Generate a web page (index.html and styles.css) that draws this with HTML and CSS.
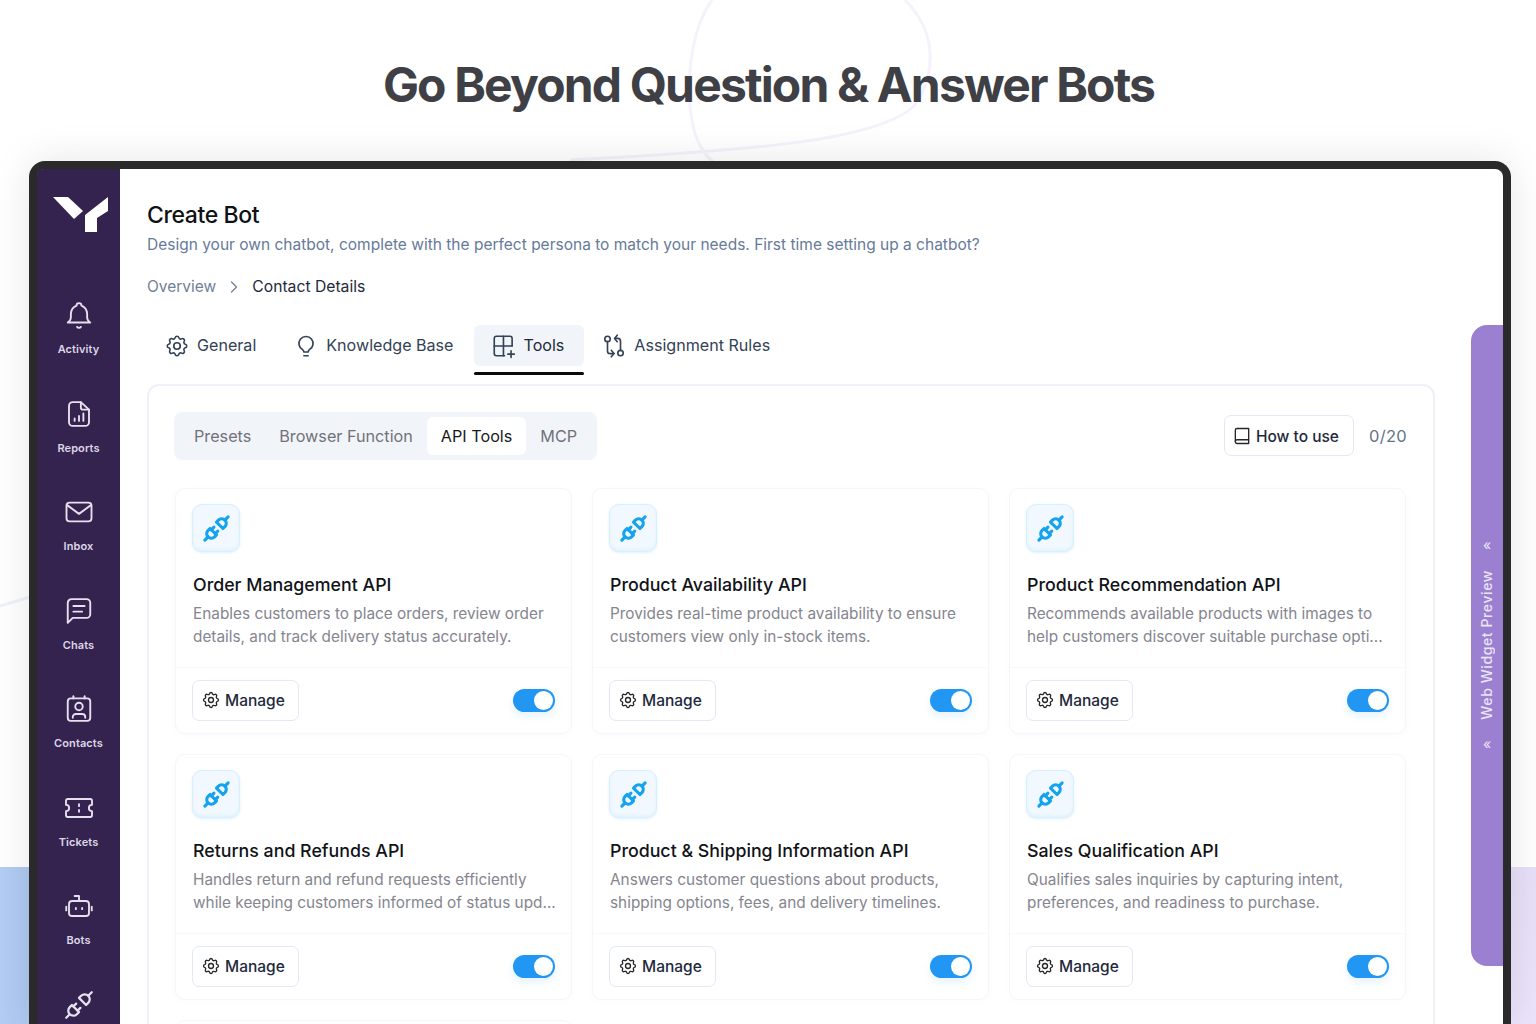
FILE: index.html
```html
<!DOCTYPE html>
<html lang="en">
<head>
<meta charset="utf-8">
<title>Go Beyond Question &amp; Answer Bots</title>
<link rel="stylesheet" href="styles.css">
</head>
<body>
<svg width="0" height="0" class="defs">
  <symbol id="i-plug" viewBox="0 0 24 24"><path d="M7 12l5 5l-1.5 1.5a3.536 3.536 0 1 1 -5 -5l1.5 -1.5z"/><path d="M17 12l-5 -5l1.5 -1.5a3.536 3.536 0 1 1 5 5l-1.5 1.5z"/><path d="M3 21l2.5 -2.5"/><path d="M18.5 5.5l2.5 -2.5"/><path d="M10 11l-2 2"/><path d="M13 14l-2 2"/></symbol>
  <symbol id="i-gear" viewBox="0 0 24 24"><path d="M10.325 4.317c.426 -1.756 2.924 -1.756 3.35 0a1.724 1.724 0 0 0 2.573 1.066c1.543 -.94 3.31 .826 2.37 2.37a1.724 1.724 0 0 0 1.065 2.572c1.756 .426 1.756 2.924 0 3.35a1.724 1.724 0 0 0 -1.066 2.573c.94 1.543 -.826 3.31 -2.37 2.37a1.724 1.724 0 0 0 -2.572 1.065c-.426 1.756 -2.924 1.756 -3.35 0a1.724 1.724 0 0 0 -2.573 -1.066c-1.543 .94 -3.31 -.826 -2.37 -2.37a1.724 1.724 0 0 0 -1.065 -2.572c-1.756 -.426 -1.756 -2.924 0 -3.35a1.724 1.724 0 0 0 1.066 -2.573c-.94 -1.543 .826 -3.31 2.37 -2.37c1 .608 2.296 .07 2.572 -1.065z"/><circle cx="12" cy="12" r="3"/></symbol>
</svg>
<div class="backdrop" aria-hidden="true">
  <div class="strip strip-left"></div>
  <div class="strip strip-right"></div>
  <svg class="curves" viewBox="0 0 1536 1024" width="1536" height="1024" fill="none">
    <path d="M712 0C690 30 684 90 694 130C700 152 716 170 728 165" stroke="#f6f2fc" stroke-width="3"/>
    <path d="M905 0C935 30 938 70 915 105C880 140 760 150 570 160" stroke="#f6f2fc" stroke-width="3"/>
    <path d="M0 606L30 597" stroke="#eef2fa" stroke-width="3"/>
  </svg>
</div>
<main class="page">
  <h1 class="hero">Go Beyond Question &amp; Answer Bots</h1>
  <div class="frame">
    <aside class="sidebar">
      <svg class="logo" viewBox="0 0 55 36" width="55" height="36"><path d="M0 0H15L30 14L21 22Z"/><path d="M55 0V14L44 21V35H32V18Z"/></svg>
      <nav class="nav">
        <a class="nav-item"><svg viewBox="0 0 24 24" class="nav-ico"><path d="M10 4.500a2 2 0 1 1 4 0a7.500 7.500 0 0 1 4.500 6.500v3a5 5 0 0 0 2.500 4h-18a5 5 0 0 0 2.500 -4v-3a7.500 7.500 0 0 1 4.500 -6.500"/><path d="M10.500 21.500a1.800 1.800 0 0 0 3 0"/></svg><span>Activity</span></a>
        <a class="nav-item"><svg viewBox="0 0 24 24" class="nav-ico"><path d="M13.500 2.500v4.500a1.500 1.500 0 0 0 1.500 1.500h5"/><path d="M17 21.500h-10a3 3 0 0 1 -3 -3v-13a3 3 0 0 1 3 -3h6.500l6.500 6v10a3 3 0 0 1 -3 3z"/><path d="M8.500 17.500v-2"/><path d="M12 17.500v-4"/><path d="M15.500 17.500v-6"/></svg><span>Reports</span></a>
        <a class="nav-item"><svg viewBox="0 0 24 24" class="nav-ico"><rect x="2" y="4.500" width="20" height="15" rx="2.500"/><path d="M2.500 6.500l9.500 7l9.500 -7"/></svg><span>Inbox</span></a>
        <a class="nav-item"><svg viewBox="0 0 24 24" class="nav-ico"><path d="M3 21.500v-16a3 3 0 0 1 3 -3h12a3 3 0 0 1 3 3v9a3 3 0 0 1 -3 3h-11z"/><path d="M7.500 8h9"/><path d="M7.500 12.500h7"/></svg><span>Chats</span></a>
        <a class="nav-item"><svg viewBox="0 0 24 24" class="nav-ico"><rect x="3" y="3.500" width="18" height="18" rx="2.500"/><path d="M7.500 3.500v-1.800"/><path d="M16.500 3.500v-1.800"/><circle cx="12" cy="10" r="3"/><path d="M7 19v-.5a2.500 2.500 0 0 1 2.500 -2.500h5a2.500 2.500 0 0 1 2.500 2.500v.5"/></svg><span>Contacts</span></a>
        <a class="nav-item"><svg viewBox="0 0 24 24" class="nav-ico"><path d="M3 4.800h18a1.400 1.400 0 0 1 1.400 1.400v3.300a2.500 2.500 0 0 0 0 5v3.300a1.400 1.400 0 0 1 -1.400 1.400h-18a1.400 1.400 0 0 1 -1.400 -1.400v-3.300a2.500 2.500 0 0 0 0 -5v-3.300a1.400 1.400 0 0 1 1.400 -1.400z"/><path d="M12 9v1.500"/><path d="M12 13.500v1.500"/></svg><span>Tickets</span></a>
        <a class="nav-item"><svg viewBox="0 0 24 24" class="nav-ico"><rect x="4" y="8" width="16" height="12" rx="2.500"/><path d="M12 8v-4h-3.500"/><path d="M9.500 13.500v1"/><path d="M14.500 13.500v1"/><path d="M1.800 12.500v3"/><path d="M22.200 12.500v3"/></svg><span>Bots</span></a>
        <a class="nav-item"><svg viewBox="0 0 24 24" class="nav-ico nav-ico-plug"><use href="#i-plug"/></svg></a>
      </nav>
    </aside>
    <section class="content">
      <header class="head">
        <h2 class="head-title">Create Bot</h2>
        <p class="head-sub">Design your own chatbot, complete with the perfect persona to match your needs. First time setting up a chatbot?</p>
      </header>
      <div class="crumbs">
        <span class="crumb-muted">Overview</span>
        <svg viewBox="0 0 24 24" class="crumb-sep"><path d="M9 6l6 6l-6 6"/></svg>
        <span class="crumb-cur">Contact Details</span>
      </div>
      <div class="tabs">
        <a class="tab"><svg class="tab-ico" viewBox="0 0 24 24"><use href="#i-gear"/></svg>General</a>
        <a class="tab"><svg class="tab-ico" viewBox="0 0 24 24"><path d="M9 15.500a6.500 6.500 0 1 1 6 0c-.7 .5 -1 1 -1 2h-4c0 -1 -.3 -1.500 -1 -2z"/><path d="M10 21h4"/></svg>Knowledge Base</a>
        <a class="tab tab-on"><svg class="tab-ico" viewBox="0 0 24 24"><path d="M19.500 12v-7a2 2 0 0 0 -2 -2h-12.500a2 2 0 0 0 -2 2v14a2 2 0 0 0 2 2h7.500"/><path d="M3 12h16.500"/><path d="M11.500 3v18"/><path d="M18.500 16.500v6"/><path d="M15.500 19.500h6"/></svg>Tools</a>
        <a class="tab"><svg class="tab-ico" viewBox="0 0 24 24"><circle cx="6" cy="5.500" r="2.500"/><circle cx="18" cy="18.500" r="2.500"/><path d="M6 8v8.500a2.500 2.500 0 0 0 2.500 2.500h3.500"/><path d="M9.500 16l2.500 3l-2.500 3"/><path d="M18 16v-8.500a2.500 2.500 0 0 0 -2.500 -2.500h-2.500"/><path d="M15 2l-2.500 3l2.500 3"/></svg>Assignment Rules</a>
      </div>
      <div class="panel">
        <div class="panel-top">
          <div class="segments">
            <span class="seg">Presets</span>
            <span class="seg">Browser Function</span>
            <span class="seg seg-on">API Tools</span>
            <span class="seg">MCP</span>
          </div>
          <div class="panel-right">
            <button class="btn btn-how"><svg class="btn-ico" viewBox="0 0 24 24"><path d="M4 19v-14a2 2 0 0 1 2 -2h14v18h-14a2 2 0 0 1 -2 -2z"/><path d="M4 18.500a2 2 0 0 1 2 -2h14"/></svg>How to use</button>
            <span class="count">0/20</span>
          </div>
        </div>
        <div class="cards">
          <article class="card"><div class="card-body"><div class="tile"><svg viewBox="0 0 24 24"><use href="#i-plug"/></svg></div><h3>Order Management API</h3><p>Enables customers to place orders, review order details, and track delivery status accurately.</p></div><div class="card-foot"><button class="btn"><svg class="btn-ico" viewBox="0 0 24 24"><use href="#i-gear"/></svg>Manage</button><span class="toggle"></span></div></article>
          <article class="card"><div class="card-body"><div class="tile"><svg viewBox="0 0 24 24"><use href="#i-plug"/></svg></div><h3>Product Availability API</h3><p>Provides real-time product availability to ensure customers view only in-stock items.</p></div><div class="card-foot"><button class="btn"><svg class="btn-ico" viewBox="0 0 24 24"><use href="#i-gear"/></svg>Manage</button><span class="toggle"></span></div></article>
          <article class="card"><div class="card-body"><div class="tile"><svg viewBox="0 0 24 24"><use href="#i-plug"/></svg></div><h3>Product Recommendation API</h3><p>Recommends available products with images to help customers discover suitable purchase opti...</p></div><div class="card-foot"><button class="btn"><svg class="btn-ico" viewBox="0 0 24 24"><use href="#i-gear"/></svg>Manage</button><span class="toggle"></span></div></article>
          <article class="card"><div class="card-body"><div class="tile"><svg viewBox="0 0 24 24"><use href="#i-plug"/></svg></div><h3>Returns and Refunds API</h3><p>Handles return and refund requests efficiently while keeping customers informed of status upd...</p></div><div class="card-foot"><button class="btn"><svg class="btn-ico" viewBox="0 0 24 24"><use href="#i-gear"/></svg>Manage</button><span class="toggle"></span></div></article>
          <article class="card"><div class="card-body"><div class="tile"><svg viewBox="0 0 24 24"><use href="#i-plug"/></svg></div><h3>Product &amp; Shipping Information API</h3><p>Answers customer questions about products, shipping options, fees, and delivery timelines.</p></div><div class="card-foot"><button class="btn"><svg class="btn-ico" viewBox="0 0 24 24"><use href="#i-gear"/></svg>Manage</button><span class="toggle"></span></div></article>
          <article class="card"><div class="card-body"><div class="tile"><svg viewBox="0 0 24 24"><use href="#i-plug"/></svg></div><h3>Sales Qualification API</h3><p>Qualifies sales inquiries by capturing intent, preferences, and readiness to purchase.</p></div><div class="card-foot"><button class="btn"><svg class="btn-ico" viewBox="0 0 24 24"><use href="#i-gear"/></svg>Manage</button><span class="toggle"></span></div></article>
          <article class="card"></article>
        </div>
      </div>
      <aside class="widget-tab">
        <span class="chev">«</span>
        <span class="widget-label">Web Widget Preview</span>
        <span class="chev">«</span>
      </aside>
    </section>
  </div>
</main>
</body>
</html>
```
FILE: styles.css
```css
* { box-sizing: border-box; }
html, body { margin: 0; height: 1024px; overflow: hidden; background: #fff; }
body { position: relative; width: 1536px; font-family: Inter, "Liberation Sans", sans-serif; color: #0f172a; }
.defs { position: absolute; }
.backdrop { position: absolute; inset: 0; }
.strip { position: absolute; top: 867px; bottom: 0; width: 120px; }
.strip-left { left: 0; background: linear-gradient(90deg, #b3cdf3, #9dbdec); }
.strip-right { right: 0; width: 60px; background: linear-gradient(135deg, #e6def8, #ece4fc); }
.curves { position: absolute; inset: 0; }
.page { position: relative; display: flex; flex-direction: column; align-items: stretch; padding: 0 25px 0 29px; }
.hero { margin: 0; height: 161px; padding: 56px 3px 0 0; text-align: center; font-size: 48px; line-height: 58px; font-weight: 700; letter-spacing: -1.85px; color: #3f3f46; }
.frame { display: flex; width: 1482px; height: 863px; border: 8px solid #2a2a2a; border-bottom: 0; border-radius: 16px 16px 0 0; background: #fff; box-shadow: 0 0 40px rgba(0,0,0,.1); }
.sidebar { flex: 0 0 83px; display: flex; flex-direction: column; align-items: center; background: #35234f; border-top-left-radius: 6px; padding-top: 28px; overflow: hidden; }
.logo { fill: #fff; flex: none; margin-left: 4px; }
.nav { display: flex; flex-direction: column; margin-top: 67px; width: 100%; }
.nav-item { height: 98.5px; flex: none; display: flex; flex-direction: column; align-items: center; color: #dcd6e6; font-size: 11px; line-height: 14px; font-weight: 600; }
.nav-item span { margin-top: 12px; letter-spacing: .1px; }
.nav-ico { width: 30px; height: 30px; flex: none; fill: none; stroke: #e6e1ee; stroke-width: 1.5; stroke-linecap: round; stroke-linejoin: round; }
.nav-ico-plug { width: 34px; height: 34px; margin-top: -2px; stroke-width: 1.6; }
.content { position: relative; flex: 1; min-width: 0; padding: 32px 69px 0 27px; border-top-right-radius: 6px; overflow: hidden; }
.head-title { margin: 0; font-size: 23px; line-height: 28px; font-weight: 500; letter-spacing: -.4px; color: #0f1115; }
.head-sub { margin: 4px 0 0; font-size: 15.5px; line-height: 24px; color: #667a99; white-space: nowrap; }
.crumbs { display: flex; align-items: center; margin-top: 18px; font-size: 15.5px; line-height: 24px; }
.crumb-muted { color: #718096; }
.crumb-cur { color: #1e293b; font-size: 15.7px; }
.crumb-sep { width: 20px; height: 20px; margin: 0 8px; fill: none; stroke: #718096; stroke-width: 1.5; stroke-linecap: round; stroke-linejoin: round; }
.tabs { display: flex; margin-top: 26px; height: 50px; }
.tab { display: flex; align-items: center; gap: 10px; height: 41px; padding: 0 20px 2px; font-size: 16.1px; font-weight: 400; color: #334155; white-space: nowrap; position: relative; border-radius: 6px; }
.tab-on { background: #f1f5f9; color: #1e293b; }
.tab-on::after { content: ""; position: absolute; left: 0; right: 0; top: 47px; height: 3px; background: #0a0a0a; border-radius: 2px; }
.tab-ico { width: 26px; height: 26px; margin: -3px; position: relative; top: 1px; fill: none; stroke: #334155; stroke-width: 1.5; stroke-linecap: round; stroke-linejoin: round; flex: none; }
.panel { margin-top: 9px; border: 2px solid #eef1f8; border-radius: 12px; height: 700px; padding: 26px 26px 0 25px; width: 1288px; }
.panel-top { display: flex; justify-content: space-between; align-items: center; height: 48px; }
.segments { display: flex; align-items: center; height: 48px; padding: 0 6px; background: #f1f5f9; border-radius: 8px; }
.seg { padding: 0 14px; height: 38px; display: flex; align-items: center; font-size: 16.2px; color: #71717a; }
.seg-on { background: #fff; color: #18181b; border-radius: 6px; }
.panel-right { display: flex; align-items: center; gap: 15px; margin-top: -1px; }
.count { font-size: 16.5px; letter-spacing: .3px; color: #64748b; }
.btn { display: inline-flex; align-items: center; gap: 3px; height: 41px; padding: 2px 13px 0 7px; background: #fff; border: 1px solid #e2e8f4; border-radius: 7px; font: 500 15.5px/1 Inter, "Liberation Sans", sans-serif; color: #1e293b; }
.btn-ico { width: 20px; height: 20px; margin: -2px 1px 0; flex: none; fill: none; stroke: #27272a; stroke-width: 1.6; stroke-linecap: round; stroke-linejoin: round; }
.btn-how { padding-left: 6px; padding-right: 14px; }
.cards { display: grid; grid-template-columns: repeat(3, 397px); gap: 20px; margin-top: 28px; margin-left: 1px; }
.card { height: 246px; background: #fff; border: 1px solid #f5f6f9; border-radius: 10px; box-shadow: 0 2px 10px rgba(15,23,42,.02); }
.card-body { height: 179px; padding: 15px 17px 0; border-bottom: 1px solid #f8f9fb; }
.tile { width: 48px; height: 48px; margin-left: -1px; display: flex; align-items: center; justify-content: center; border: 1.5px solid #d9effc; border-radius: 10px; background: #f1f8ff; box-shadow: inset 0 -2px 3px rgba(14,165,233,.06), 0 1px 3px rgba(14,165,233,.14); }
.tile svg { width: 31px; height: 31px; fill: none; stroke: #16a3ee; stroke-width: 2.4; stroke-linecap: round; stroke-linejoin: round; }
.card h3 { margin: 21px 0 0; font-size: 17.8px; line-height: 24px; font-weight: 500; color: #111318; white-space: nowrap; }
.card p { margin: 5px -8px 0 0; font-size: 15.35px; line-height: 23px; color: #85858f; }
.card-foot { display: flex; justify-content: space-between; align-items: center; height: 66px; padding: 0 16px 2px 16px; }
.toggle { position: relative; width: 42px; height: 23px; border-radius: 12px; background: #2196f3; box-shadow: 0 4px 8px rgba(33,150,243,.12); }
.toggle::after { content: ""; position: absolute; right: 2px; top: 2px; width: 19px; height: 19px; border-radius: 50%; background: #fff; }
.widget-tab { position: absolute; right: 0; top: 156px; width: 32px; height: 641px; background: #9b7fd0; border-radius: 16px 0 0 16px; display: flex; flex-direction: column; align-items: center; padding-top: 212px; color: #ebe4f7; }
.chev { font-size: 14px; line-height: 16px; }
.widget-label { writing-mode: vertical-rl; transform: rotate(180deg); font-size: 14px; font-weight: 500; letter-spacing: .6px; line-height: 16px; margin: 17px 0 16px; white-space: nowrap; }
```
